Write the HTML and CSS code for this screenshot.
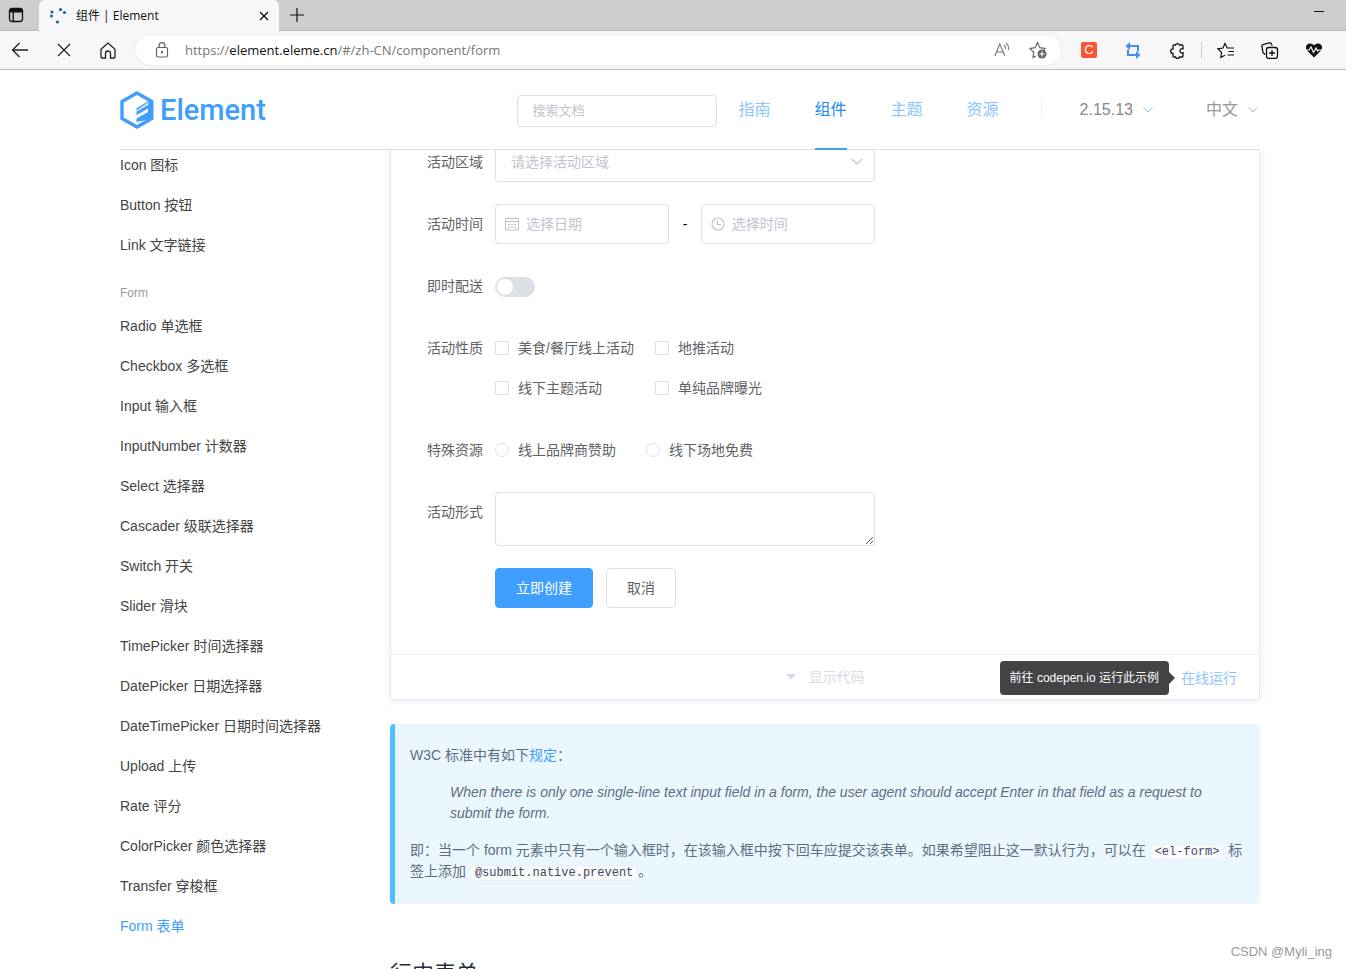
FILE: index.html
```html
<!DOCTYPE html>
<html lang="zh-CN">
<head>
<meta charset="utf-8">
<title>组件 | Element</title>
<link rel="stylesheet" href="styles.css">
</head>
<body>
<div class="tab-strip">
  <button class="strip-btn" aria-label="标签页操作"><svg width="16" height="16" viewBox="0 0 16 16" fill="none" stroke="#111" stroke-width="1.3"><rect x="1.5" y="1.5" width="13" height="13" rx="2.5"/><path d="M1.5 3.2h13M1.5 4.4h13" stroke-width="2.4"/><path d="M5.2 5v9.5"/></svg></button>
  <div class="tab">
    <svg width="18" height="18" viewBox="0 0 18 18" fill="#1068b0"><circle cx="3" cy="5" r="1.600"/><circle cx="2.500" cy="9" r="1.500"/><circle cx="11.500" cy="2.500" r="1.600"/><circle cx="15.500" cy="5.500" r="1.600"/><circle cx="8.500" cy="15" r="1.600"/></svg>
    <span class="tab-title">组件 | Element</span>
    <button class="tab-close" aria-label="关闭标签页"><svg width="10" height="10" viewBox="0 0 10 10" stroke="#111" stroke-width="1.4"><path d="M1 1l8 8M9 1l-8 8"/></svg></button>
  </div>
  <button class="new-tab" aria-label="新建标签页"><svg width="14" height="14" viewBox="0 0 14 14" stroke="#111" stroke-width="1.2"><path d="M7 0v14M0 7h14"/></svg></button>
  <button class="minimize" aria-label="最小化"><svg width="10" height="10" viewBox="0 0 10 10" stroke="#111"><path d="M0 5.500h10"/></svg></button>
</div>
<div class="toolbar">
  <button class="tool" aria-label="返回"><svg width="18" height="18" viewBox="0 0 18 18" fill="none" stroke="#222" stroke-width="1.3"><path d="M17 9H1.500M8.500 2L1.500 9l7 7"/></svg></button>
  <button class="tool" aria-label="停止"><svg width="14" height="14" viewBox="0 0 14 14" stroke="#222" stroke-width="1.2"><path d="M1 1l12 12M13 1L1 13"/></svg></button>
  <button class="tool" aria-label="主页"><svg width="16" height="17" viewBox="0 0 16 17" fill="none" stroke="#222" stroke-width="1.3"><path d="M1 7.300L8 1l7 6.300V15a1 1 0 0 1-1 1h-3.500v-4.500a2.500 2.500 0 0 0-5 0V16H2a1 1 0 0 1-1-1z"/></svg></button>
  <div class="address">
    <svg width="14" height="16" viewBox="0 0 14 16" fill="none" stroke="#666" stroke-width="1.2"><rect x="1.500" y="5.500" width="11" height="9.500" rx="1.500"/><path d="M4.200 5.500V3.500a2.800 2.800 0 0 1 5.600 0v2"/><circle cx="7" cy="10.200" r=".6" fill="#666"/></svg>
    <div class="url">https://<span class="host">element.eleme.cn</span>/#/zh-CN/component/form</div>
    <button class="pill-btn" aria-label="大声朗读"><svg width="16" height="16" viewBox="0 0 16 16" fill="none" stroke="#777" stroke-width="1.100"><path d="M.8 14L5.800 2l5 12M2.500 10h6.600M10 3c1.200 1 1.600 2.400 1.300 4M12 1c2.200 1.800 2.900 4.500 2.200 7"/></svg></button>
    <button class="pill-btn" aria-label="添加到收藏夹"><svg width="18" height="18" viewBox="0 0 18 18" fill="none" stroke="#666" stroke-width="1.200"><path d="M7 15l-3 1.500.8-5L1 7.500l5.200-.8L8.500 1.500l2.300 5.200 5.200.8-1 1.500"/><circle cx="13" cy="13" r="4.500" fill="#666" stroke="none"/><path d="M13 10.500v5M10.500 13h5" stroke="#fff"/></svg></button>
  </div>
  <button class="tool" aria-label="C"><span class="ext-c">C</span></button>
  <button class="tool" aria-label="同步扩展"><svg width="16" height="17" viewBox="0 0 16 17" fill="none" stroke="#458df6" stroke-width="2"><path d="M4 4h9v5.500M3 7.500V13h8"/><path d="M5 0v8L.5 4zM11 9v8l4.500-4z" fill="#458df6" stroke="none"/></svg></button>
  <button class="tool" aria-label="扩展"><svg width="16" height="17" viewBox="0 0 16 17" fill="none" stroke="#111" stroke-width="1.300"><path d="M5 3h1.500a2.100 2.100 0 0 1 4 0H13a1 1 0 0 1 1 1v2.800a2.200 2.200 0 1 0 0 4V14a1 1 0 0 1-1 1h-2.500a2.100 2.100 0 0 1-4 0H5a1 1 0 0 1-1-1v-2.500a2.300 2.300 0 0 1 0-4.600V4a1 1 0 0 1 1-1z"/></svg></button>
  <span class="tool-divider"></span>
  <button class="tool" aria-label="收藏夹"><svg width="18" height="17" viewBox="0 0 18 17" fill="none" stroke="#111" stroke-width="1.200"><path d="M8 13.200L3.800 15.500l.8-5L1 6.800l4.900-.8L8 1.500 10.200 6H17M11.500 9.500H17M10.500 13H17"/></svg></button>
  <button class="tool" aria-label="集锦"><svg width="18" height="17" viewBox="0 0 18 17" fill="none" stroke="#111" stroke-width="1.300"><path d="M4.200 12.500L2.500 11a2 2 0 0 1-.7-1.200L1 4.500A2 2 0 0 1 2.600 2.300l5.800-1.400a2 2 0 0 1 2.300 1.500l.3 1.300"/><rect x="5.500" y="5.500" width="11" height="10.800" rx="2.200"/><path d="M11 8v6M8 11h6"/></svg></button>
  <button class="tool" aria-label="浏览器概要"><svg width="18" height="17" viewBox="0 0 18 17"><path d="M9 15.500L2 8.500C-.5 5.500 1.500 1.500 5 1.500c1.800 0 3 .8 4 2 1-1.200 2.200-2 4-2 3.500 0 5.500 4 3 7z" fill="#111"/><path d="M0 8h4l2-3 2.500 5.500L11 6l1.500 3 1-1H18" fill="none" stroke="#f7f7f7" stroke-width="1.200"/></svg></button>
</div>

<header class="site-header">
  <a class="logo" href="#">
    <svg width="34" height="38" viewBox="0 0 34 38"><path fill="none" stroke="#409eff" stroke-width="3.400" d="M17 2l14.800 8.500v17L17 36 2 27.500v-17z"/><path fill="#409eff" d="M16.500 17.200L31 8.800V28L16.500 31v-3.400L28 21v-3.500L16.500 24.200v-3.600L28.500 13.500v-2L16.500 19.500z"/></svg>
    <span class="logo-text">Element</span>
  </a>
  <input class="search" type="text" placeholder="搜索文档" aria-label="搜索文档">
  <nav class="nav">
    <a href="#">指南</a>
    <a href="#" class="active">组件</a>
    <a href="#">主题</a>
    <a href="#">资源</a>
  </nav>
  <span class="nav-divider"></span>
  <button class="nav-drop version">2.15.13<svg width="10" height="6" viewBox="0 0 10 6" fill="none" stroke="#8fc0e8"><path d="M.5 .5L5 5 9.500 .5"/></svg></button>
  <button class="nav-drop">中文<svg width="10" height="6" viewBox="0 0 10 6" fill="none" stroke="#bbb"><path d="M.5 .5L5 5 9.500 .5"/></svg></button>
</header>

<div class="page">
  <aside class="sidebar">
    <a href="#">Icon 图标</a>
    <a href="#">Button 按钮</a>
    <a href="#">Link 文字链接</a>
    <div class="group">Form</div>
    <a href="#">Radio 单选框</a>
    <a href="#">Checkbox 多选框</a>
    <a href="#">Input 输入框</a>
    <a href="#">InputNumber 计数器</a>
    <a href="#">Select 选择器</a>
    <a href="#">Cascader 级联选择器</a>
    <a href="#">Switch 开关</a>
    <a href="#">Slider 滑块</a>
    <a href="#">TimePicker 时间选择器</a>
    <a href="#">DatePicker 日期选择器</a>
    <a href="#">DateTimePicker 日期时间选择器</a>
    <a href="#">Upload 上传</a>
    <a href="#">Rate 评分</a>
    <a href="#">ColorPicker 颜色选择器</a>
    <a href="#">Transfer 穿梭框</a>
    <a href="#" class="current">Form 表单</a>
  </aside>
  <main class="content">
    <section class="demo">
      <form class="form">
        <div class="row">
          <label class="label" for="region">活动区域</label>
          <div class="field select-wrap">
            <select class="box" id="region"><option>请选择活动区域</option></select>
            <svg class="select-arrow" width="12" height="8" viewBox="0 0 12 8" fill="none" stroke="#c0c4cc" stroke-width="1.200"><path d="M1 1l5 5 5-5"/></svg>
          </div>
        </div>
        <div class="row">
          <label class="label" for="date">活动时间</label>
          <div class="field time-grid">
            <div class="picker">
              <svg class="picker-icon" width="14" height="14" viewBox="0 0 14 14" fill="none" stroke="#c0c4cc"><path d="M.5 1.500h13v11.500H.5zM.5 4.500h13M3.500 0v2.500M10.500 0v2.500M3 7.500h2M6 7.500h2M9 7.500h2M3 10.500h2M6 10.500h2M9 10.500h2"/></svg>
              <input class="box" id="date" type="text" placeholder="选择日期">
            </div>
            <span class="dash">-</span>
            <div class="picker">
              <svg class="picker-icon" width="14" height="14" viewBox="0 0 14 14" fill="none" stroke="#c0c4cc" stroke-width="1.200"><circle cx="7" cy="7" r="6"/><path d="M6.500 3.500v4H10"/></svg>
              <input class="box" type="text" placeholder="选择时间" aria-label="选择时间">
            </div>
          </div>
        </div>
        <div class="row">
          <label class="label" for="delivery">即时配送</label>
          <div class="field switch-field"><input class="switch" id="delivery" type="checkbox" role="switch"></div>
        </div>
        <div class="row">
          <span class="label">活动性质</span>
          <div class="field checks">
            <label class="choice"><input type="checkbox">美食/餐厅线上活动</label>
            <label class="choice"><input type="checkbox">地推活动</label>
            <label class="choice"><input type="checkbox">线下主题活动</label>
            <label class="choice"><input type="checkbox">单纯品牌曝光</label>
          </div>
        </div>
        <div class="row">
          <span class="label">特殊资源</span>
          <div class="field radios">
            <label class="choice"><input type="radio" name="resource">线上品牌商赞助</label>
            <label class="choice"><input type="radio" name="resource">线下场地免费</label>
          </div>
        </div>
        <div class="row">
          <label class="label" for="desc">活动形式</label>
          <div class="field"><textarea class="box area" id="desc"></textarea></div>
        </div>
        <div class="row actions">
          <button type="button" class="btn primary">立即创建</button>
          <button type="button" class="btn">取消</button>
        </div>
      </form>
      <div class="demo-footer">
        <button class="show-code"><svg width="10" height="6" viewBox="0 0 10 6" fill="#d3dce6"><path d="M0 0h10L5 6z"/></svg>显示代码</button>
        <div class="run">
          <button class="run-link">在线运行</button>
          <div class="tooltip" role="tooltip">前往 codepen.io 运行此示例</div>
        </div>
      </div>
    </section>
    <section class="tip">
      <p>W3C 标准中有如下<a href="#">规定</a>：</p>
      <blockquote>When there is only one single-line text input field in a form, the user agent should accept Enter in that field as a request to submit the form.</blockquote>
      <p>即：当一个 form 元素中只有一个输入框时，在该输入框中按下回车应提交该表单。如果希望阻止这一默认行为，可以在 <code>&lt;el-form&gt;</code> 标签上添加 <code>@submit.native.prevent</code>。</p>
    </section>
    <h3>行内表单</h3>
  </main>
</div>
<div class="watermark">CSDN @Myli_ing</div>
</body>
</html>
```

FILE: styles.css
```css
* { box-sizing: border-box; }
body {
  margin: 0;
  height: 100vh;
  display: flex;
  flex-direction: column;
  overflow: hidden;
  background: #fff;
  color: #606266;
  font: 14px/20px "Liberation Sans", "Noto Sans CJK SC", sans-serif;
}
button, input, select, textarea { font: inherit; color: inherit; margin: 0; }
button { background: none; border: 0; padding: 0; }
a { text-decoration: none; color: inherit; }
svg { flex: none; display: block; }

/* Browser window */
.tab-strip {
  flex: none;
  display: flex;
  align-items: stretch;
  height: 31px;
  background: #cdcdcd;
  border-bottom: 1px solid #bcbcbc;
}
.strip-btn { width: 39px; padding-left: 8px; display: flex; align-items: center; }
.tab {
  width: 240px;
  height: 31px;
  padding: 0 10px;
  display: flex;
  align-items: center;
  gap: 9px;
  background: #f7f7f7;
  border-radius: 6px 6px 0 0;
  color: #111;
  font: 12px/16px "Open Sans", "Noto Sans CJK SC", sans-serif;
}
.tab-title { flex: 1; }
.new-tab { width: 35px; display: grid; place-items: center; }
.minimize { margin-left: auto; width: 54px; padding-bottom: 8px; display: grid; place-items: center; }
.toolbar {
  flex: none;
  display: flex;
  align-items: center;
  gap: 4px;
  height: 39px;
  padding-right: 12px;
  background: #f7f7f7;
  border-bottom: 1px solid #bfbfbf;
}
.tool { width: 40px; height: 30px; display: grid; place-items: center; }
.tool-divider { width: 1px; height: 16px; background: #ccc; }
.address {
  flex: 1;
  height: 30px;
  margin: 0 4px;
  padding: 0 14px 0 19px;
  display: flex;
  align-items: center;
  background: #fff;
  border-radius: 15px;
  box-shadow: 0 0 3px #e4e4e4;
}
.url {
  flex: 1;
  margin-left: 16px;
  color: #767676;
  font: 13px/20px "Open Sans", sans-serif;
}
.host { color: #111; }
.pill-btn { width: 18px; margin-left: 18px; display: grid; place-items: center; }
.ext-c {
  width: 16px;
  height: 16px;
  border-radius: 2px;
  background: #fc5531;
  color: #fff;
  font-size: 13px;
  line-height: 16px;
  text-align: center;
}

/* Site header */
.site-header {
  flex: none;
  display: flex;
  align-items: center;
  height: 80px;
  margin: 0 86px 0 120px;
  padding-right: 2px;
  border-bottom: 1px solid #dcdfe6;
}
.logo { display: flex; align-items: center; gap: 6px; margin-right: auto; color: #409eff; }
.logo-text { font: 500 29px/38px Roboto, sans-serif; }
.search {
  width: 200px;
  height: 32px;
  margin-top: 2px;
  padding: 0 15px;
  border: 1px solid #dcdfe6;
  border-radius: 4px;
  font-size: 13px;
  outline: none;
}
::placeholder { color: #c0c4cc; opacity: 1; }
.nav { display: flex; align-self: stretch; gap: 44px; margin-left: 22px; font-size: 16px; line-height: 80px; }
.nav a { height: 80px; color: #8cc5ff; }
.nav .active { color: #1989fa; border-bottom: 2px solid #409eff; }
.nav-divider { width: 1px; height: 16px; margin: 0 38px 0 42px; background: #ebebeb; }
.nav-drop { display: flex; align-items: center; gap: 10px; font-size: 16px; color: #999; }
.version { margin-right: 53px; color: #888; }

/* Page body */
.page {
  flex: 1;
  min-height: 0;
  display: flex;
  gap: 30px;
  overflow: hidden;
  padding: 0 86px 0 120px;
}
.sidebar { flex: none; width: 240px; margin-top: -5px; color: #444; }
.sidebar a { display: block; line-height: 40px; }
.sidebar .current { color: #409eff; }
.group { margin-top: 15px; font-size: 12px; line-height: 26px; color: #999; }
.content { flex: 1; min-width: 0; margin-top: -33px; }
.demo { border: 1px solid #ebebeb; border-radius: 3px; box-shadow: 0 0 8px rgba(232, 237, 250, .6), 0 2px 4px rgba(232, 237, 250, .5); }
.form { width: 508px; padding: 24px; }
.row { display: flex; margin-bottom: 22px; }
.label { flex: none; width: 80px; padding-right: 12px; text-align: right; line-height: 40px; }
.field { flex: 1; min-width: 0; }
.box {
  display: block;
  width: 100%;
  height: 40px;
  padding: 0 15px;
  border: 1px solid #dcdfe6;
  border-radius: 4px;
  background: #fff;
  outline: none;
}
.select-wrap { position: relative; }
select.box { appearance: none; color: #c0c4cc; }
.select-arrow { position: absolute; right: 12px; top: 16px; }
.time-grid { display: grid; grid-template-columns: 11fr 2fr 11fr; line-height: 40px; }
.dash { text-align: center; color: #000; }
.picker { position: relative; }
.picker .box { padding-left: 30px; }
.picker-icon { position: absolute; left: 10px; top: 13px; }
.switch-field { display: flex; align-items: center; height: 42px; margin-bottom: -2px; }
.switch {
  appearance: none;
  width: 40px;
  height: 20px;
  padding: 2px;
  border-radius: 10px;
  background: #dcdfe6;
}
.switch::before { content: ""; display: block; width: 16px; height: 16px; border-radius: 50%; background: #fff; }
.checks { display: grid; grid-template-columns: 160px 1fr; }
.radios { display: flex; gap: 30px; }
.choice { display: flex; align-items: center; gap: 9px; height: 40px; }
.choice input { appearance: none; width: 14px; height: 14px; border: 1px solid #dcdfe6; border-radius: 2px; background: #fff; }
.choice input[type="radio"] { border-radius: 50%; }
.area { height: 54px; padding: 5px 15px; resize: vertical; }
.actions { padding-left: 80px; gap: 13px; }
.btn { height: 40px; padding: 0 20px; border: 1px solid #dcdfe6; border-radius: 4px; }
.primary { background: #409eff; border-color: #409eff; color: #fff; }
.demo-footer {
  display: flex;
  justify-content: center;
  align-items: center;
  position: relative;
  height: 45px;
  border-top: 1px solid #eaeefb;
}
.show-code { display: flex; align-items: center; gap: 13px; color: #d3dce6; }
.run { position: absolute; right: 22px; top: 13px; }
.run-link { display: block; color: #8cc5ff; }
.tooltip {
  position: absolute;
  right: 100%;
  top: -7px;
  margin-right: 12px;
  padding: 7px 10px;
  border-radius: 4px;
  background: #434446;
  color: #fff;
  font-size: 12px;
  white-space: nowrap;
}
.tooltip::after {
  content: "";
  position: absolute;
  left: 100%;
  top: 11px;
  border: 6px solid transparent;
  border-left-color: #434446;
  border-right-width: 0;
}
.tip {
  margin-top: 24px;
  padding: 21px 15px 22px;
  border-left: 5px solid #50bfff;
  border-radius: 4px;
  background: #ebf7ff;
  color: #5e6d82;
  line-height: 21px;
}
.tip p { margin: 0; }
.tip a { color: #409eff; }
.tip blockquote { margin: 16px 40px; font-style: italic; }
.tip code {
  padding: 0 4px;
  border: 1px solid #eaeefb;
  border-radius: 4px;
  background: #f9fafc;
  color: #3f4a5c;
  font: 12px/18px "Liberation Mono", monospace;
}
h3 { margin: 53px 0 0; font-size: 22px; line-height: 33px; font-weight: 400; color: #1f2f3d; }
.watermark { position: absolute; right: 14px; bottom: 7px; font-size: 13px; color: #999; }
```
